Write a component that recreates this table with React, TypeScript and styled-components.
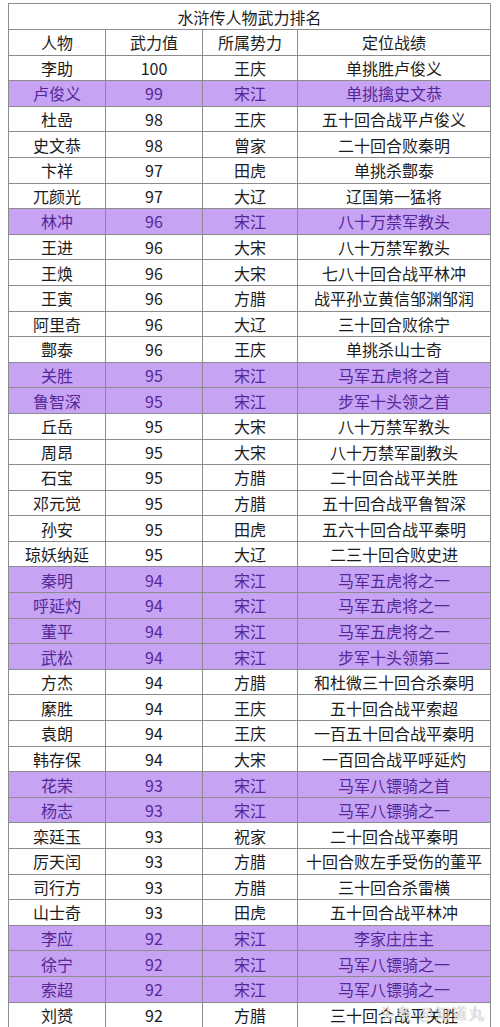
import styled, { createGlobalStyle } from 'styled-components';

const GlobalStyle = createGlobalStyle`
	html, body {
		margin: 0;
		padding: 0;
		background: #ffffff;
	}
	body {
		font-family: 'Noto Sans CJK SC', 'Noto Sans', sans-serif;
	}
`;

const Page = styled.main`
	position: relative;
	width: 500px;
	height: 1027px;
	overflow: hidden;
	padding: 3px 0 0 8px;
	box-sizing: border-box;
`;

const Table = styled.div`
	width: 483px;
	border-top: 1px solid #8c8c8c;
	border-left: 1px solid #8c8c8c;
	box-sizing: border-box;
`;

const TitleRow = styled.div`
	height: 26px;
	box-sizing: border-box;
	border-right: 1px solid #8c8c8c;
	border-bottom: 1px solid #8c8c8c;
	display: flex;
	align-items: center;
	justify-content: center;
	font-size: 16px;
	color: #1c1c1c;
`;

const Row = styled.div<{ $hl?: boolean }>`
	display: grid;
	grid-template-columns: 97px 97px 95px 193px;
	height: 25.6px;
	background: ${(p) => (p.$hl ? '#c6a3f3' : '#ffffff')};
	color: ${(p) => (p.$hl ? '#55289a' : '#1c1c1c')};
`;

const Cell = styled.div`
	box-sizing: border-box;
	border-right: 1px solid #8c8c8c;
	border-bottom: 1px solid #8c8c8c;
	display: flex;
	align-items: center;
	justify-content: center;
	font-size: 16px;
	white-space: nowrap;
	line-height: 1;
`;

const Watermark = styled.div`
	position: absolute;
	right: 14px;
	bottom: 4px;
	font-size: 15px;
	color: rgba(255, 255, 255, 0.75);
	text-shadow: 0 0 1px rgba(90, 90, 90, 0.7);
	letter-spacing: 2px;
`;

type Hero = [string, string, string, string];

const heroes: Hero[] = [
	['李助', '100', '王庆', '单挑胜卢俊义'],
	['卢俊义', '99', '宋江', '单挑擒史文恭'],
	['杜嵒', '98', '王庆', '五十回合战平卢俊义'],
	['史文恭', '98', '曾家', '二十回合败秦明'],
	['卞祥', '97', '田虎', '单挑杀鄷泰'],
	['兀颜光', '97', '大辽', '辽国第一猛将'],
	['林冲', '96', '宋江', '八十万禁军教头'],
	['王进', '96', '大宋', '八十万禁军教头'],
	['王焕', '96', '大宋', '七八十回合战平林冲'],
	['王寅', '96', '方腊', '战平孙立黄信邹渊邹润'],
	['阿里奇', '96', '大辽', '三十回合败徐宁'],
	['鄷泰', '96', '王庆', '单挑杀山士奇'],
	['关胜', '95', '宋江', '马军五虎将之首'],
	['鲁智深', '95', '宋江', '步军十头领之首'],
	['丘岳', '95', '大宋', '八十万禁军教头'],
	['周昂', '95', '大宋', '八十万禁军副教头'],
	['石宝', '95', '方腊', '二十回合战平关胜'],
	['邓元觉', '95', '方腊', '五十回合战平鲁智深'],
	['孙安', '95', '田虎', '五六十回合战平秦明'],
	['琼妖纳延', '95', '大辽', '二三十回合败史进'],
	['秦明', '94', '宋江', '马军五虎将之一'],
	['呼延灼', '94', '宋江', '马军五虎将之一'],
	['董平', '94', '宋江', '马军五虎将之一'],
	['武松', '94', '宋江', '步军十头领第二'],
	['方杰', '94', '方腊', '和杜微三十回合杀秦明'],
	['縻胜', '94', '王庆', '五十回合战平索超'],
	['袁朗', '94', '王庆', '一百五十回合战平秦明'],
	['韩存保', '94', '大宋', '一百回合战平呼延灼'],
	['花荣', '93', '宋江', '马军八镖骑之首'],
	['杨志', '93', '宋江', '马军八镖骑之一'],
	['栾廷玉', '93', '祝家', '二十回合战平秦明'],
	['厉天闰', '93', '方腊', '十回合败左手受伤的董平'],
	['司行方', '93', '方腊', '三十回合杀雷横'],
	['山士奇', '93', '田虎', '五十回合战平林冲'],
	['李应', '92', '宋江', '李家庄庄主'],
	['徐宁', '92', '宋江', '马军八镖骑之一'],
	['索超', '92', '宋江', '马军八镖骑之一'],
	['刘赟', '92', '方腊', '三十回合战平关胜'],
];

function App() {
	return (
		<>
			<GlobalStyle />
			<Page>
				<Table>
					<TitleRow>水浒传人物武力排名</TitleRow>
					<Row>
						<Cell>人物</Cell>
						<Cell>武力值</Cell>
						<Cell>所属势力</Cell>
						<Cell>定位战绩</Cell>
					</Row>
					{heroes.map(([name, power, side, note]) => (
						<Row key={name} $hl={side === '宋江'}>
							<Cell>{name}</Cell>
							<Cell>{power}</Cell>
							<Cell>{side}</Cell>
							<Cell>{note}</Cell>
						</Row>
					))}
				</Table>
				<Watermark>头条 @知道丸</Watermark>
			</Page>
		</>
	);
}

export default App;
